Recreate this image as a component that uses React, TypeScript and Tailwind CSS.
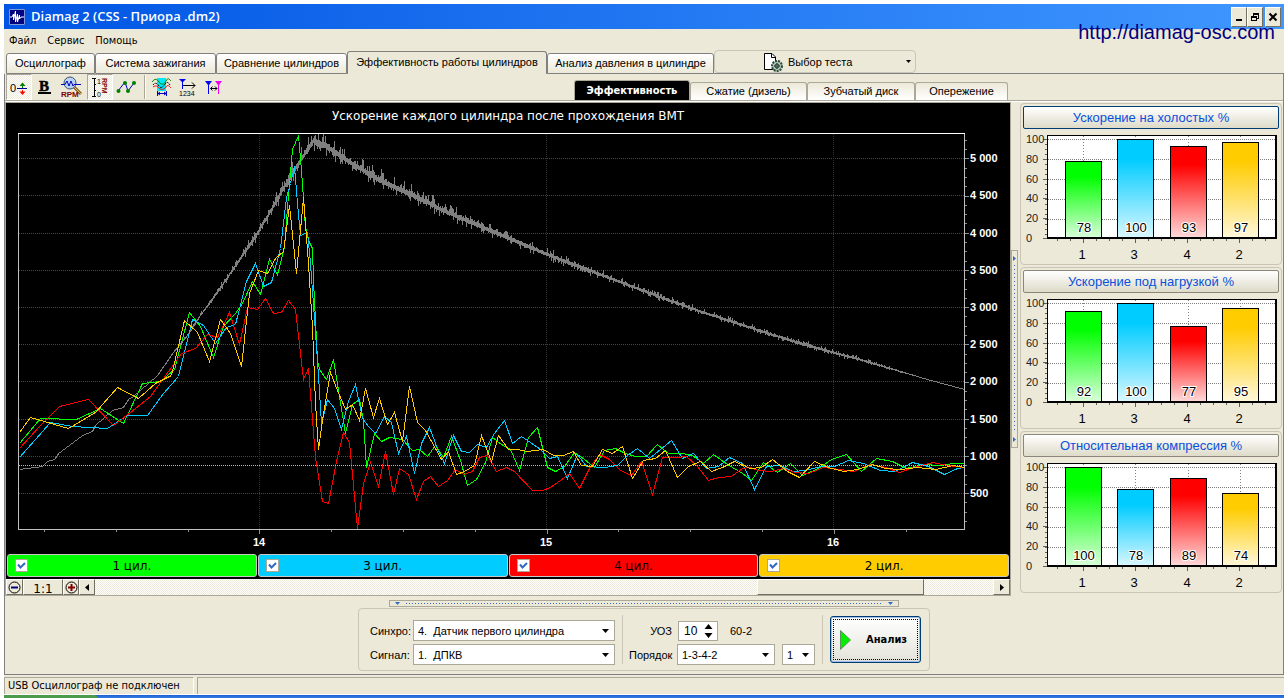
import type { ReactNode } from "react";

type Point = [number, number];

const COLORS = {
  green: "#00ff00",
  blue: "#00ccff",
  red: "#ff0000",
  yellow: "#ffcc00",
};

const GREEN: Point[] = [
  [19, 443], [40, 418], [76, 419], [100, 408], [123, 423], [142, 383], [160, 381], [174, 369],
  [189, 312], [200, 326], [213, 357], [223, 326], [235, 313], [242, 303], [252, 281], [260, 294],
  [269, 259], [277, 274], [284, 247], [287, 207], [292, 149], [298, 135], [301, 170], [305, 227],
  [309, 242], [312, 248], [313, 280], [317, 360], [319, 369], [326, 379], [333, 359], [338, 390],
  [345, 433], [352, 404], [359, 399], [363, 420], [366, 467], [374, 433], [381, 441], [389, 437],
  [402, 439], [412, 450], [419, 449], [427, 456], [435, 445], [443, 457], [451, 436], [460, 460],
  [467, 485], [476, 479], [485, 462], [492, 437], [501, 444], [510, 449], [519, 470], [528, 437],
  [537, 427], [547, 467], [555, 471], [564, 466], [574, 452], [584, 459], [594, 467], [604, 450],
  [615, 448], [625, 453], [635, 456], [646, 456], [657, 444], [668, 453], [682, 453], [692, 455],
  [703, 463], [713, 454], [727, 464], [742, 473], [751, 480], [763, 462], [777, 472], [790, 463],
  [802, 475], [818, 468], [831, 459], [846, 454], [861, 471], [876, 458], [892, 461], [906, 468],
  [923, 464], [940, 465], [953, 463], [964, 463],
];

const BLUE: Point[] = [
  [19, 457], [50, 422], [72, 426], [107, 428], [127, 415], [147, 415], [163, 393], [178, 376],
  [192, 319], [203, 325], [215, 343], [226, 327], [235, 324], [246, 281], [255, 263], [263, 286],
  [271, 282], [280, 248], [286, 197], [290, 183], [294, 166], [297, 203], [300, 235], [307, 232],
  [310, 263], [317, 360], [321, 423], [327, 399], [334, 408], [341, 429], [348, 401], [355, 384],
  [362, 418], [368, 426], [375, 433], [384, 416], [391, 422], [398, 453], [406, 436], [414, 473],
  [421, 443], [429, 427], [437, 448], [444, 463], [453, 435], [461, 451], [469, 452], [477, 444],
  [486, 447], [494, 433], [504, 420], [512, 443], [521, 436], [530, 442], [540, 449], [549, 458],
  [557, 456], [567, 478], [577, 454], [586, 466], [605, 467], [617, 465], [627, 455], [637, 448],
  [649, 458], [660, 449], [671, 440], [682, 458], [693, 453], [706, 468], [718, 466], [729, 457],
  [742, 463], [754, 489], [766, 466], [780, 465], [792, 471], [805, 470], [820, 466], [834, 466],
  [848, 460], [863, 463], [880, 470], [895, 471], [912, 462], [928, 466], [944, 474], [957, 468],
  [964, 467],
];

const RED: Point[] = [
  [19, 448], [40, 425], [59, 406], [88, 399], [113, 425], [130, 412], [150, 396], [163, 378],
  [181, 353], [195, 348], [207, 334], [217, 337], [229, 312], [239, 344], [247, 307], [257, 309],
  [265, 298], [273, 313], [281, 312], [288, 300], [295, 309], [303, 379], [308, 368], [315, 457],
  [322, 501], [328, 503], [336, 461], [343, 432], [349, 442], [357, 528], [363, 483], [370, 462],
  [378, 486], [385, 451], [393, 494], [399, 468], [408, 474], [416, 499], [423, 481], [430, 476],
  [438, 486], [447, 480], [455, 469], [463, 474], [472, 471], [479, 457], [487, 455], [496, 471],
  [506, 467], [514, 471], [532, 490], [542, 490], [550, 487], [560, 480], [569, 473], [579, 488],
  [590, 466], [599, 454], [609, 459], [620, 470], [631, 475], [641, 461], [652, 494], [662, 457],
  [677, 457], [686, 456], [697, 466], [708, 480], [718, 477], [731, 476], [742, 468], [750, 467],
  [758, 470], [770, 471], [783, 468], [795, 472], [808, 473], [823, 467], [840, 469], [853, 471],
  [870, 464], [885, 467], [899, 472], [913, 467], [932, 462], [947, 465], [964, 467],
];

const YELLOW: Point[] = [
  [19, 432], [30, 417], [68, 428], [95, 412], [117, 387], [138, 398], [155, 383], [171, 375],
  [184, 320], [197, 332], [209, 361], [220, 319], [230, 333], [241, 366], [249, 293], [258, 270],
  [267, 273], [275, 258], [283, 251], [289, 205], [296, 273], [303, 197], [308, 263], [312, 327],
  [315, 403], [318, 449], [322, 420], [330, 372], [337, 390], [345, 409], [352, 404], [359, 420],
  [365, 388], [373, 417], [379, 398], [387, 424], [394, 412], [402, 441], [409, 386], [417, 422],
  [425, 430], [441, 459], [448, 451], [456, 474], [464, 471], [474, 465], [481, 435], [491, 461],
  [498, 435], [508, 449], [517, 449], [527, 451], [543, 449], [553, 455], [563, 455], [573, 451],
  [581, 465], [592, 466], [602, 449], [612, 453], [622, 446], [632, 478], [643, 460], [655, 458],
  [665, 450], [677, 477], [688, 466], [700, 461], [711, 471], [722, 467], [734, 461], [750, 468],
  [761, 467], [772, 459], [787, 471], [799, 477], [814, 461], [828, 467], [843, 471], [857, 469],
  [872, 464], [885, 468], [900, 469], [917, 467], [935, 469], [953, 465], [964, 467],
];

const SPEED: Point[] = [
  [19, 469], [42, 466], [47, 461], [54, 459], [58, 453], [82, 435], [92, 431], [95, 425],
  [112, 410], [123, 407], [128, 399], [133, 396], [157, 375], [173, 352], [187, 335], [200, 315],
  [217, 292], [233, 268], [252, 241], [267, 216], [283, 188], [300, 160], [313, 140], [328, 147],
  [353, 164], [380, 180], [413, 195], [443, 210], [490, 230], [547, 254], [600, 274], [650, 293],
  [700, 311], [740, 324], [768, 333], [800, 343], [833, 352], [863, 360], [900, 371], [927, 379],
  [964, 389],
];

// half height of the jitter on the speed trace
const JITTER: Point[] = [
  [19, 0], [170, 0], [200, 2], [240, 5], [290, 9], [400, 8], [450, 7], [520, 6], [600, 4],
  [700, 3], [810, 3], [870, 2], [920, 0], [964, 0],
];

function interpolate(points: Point[], x: number) {
  for (let i = 1; i < points.length; i++) {
    const [x1, y1] = points[i];
    if (x <= x1) {
      const [x0, y0] = points[i - 1];
      return y0 + ((y1 - y0) * (x - x0)) / (x1 - x0);
    }
  }
  return points[points.length - 1][1];
}

function noise(n: number) {
  const v = Math.sin(n * 127.1) * 43758.5453;
  return v - Math.floor(v);
}

function speedPath() {
  const parts: string[] = [];
  for (let x = 19; x <= 964; x++) {
    const y = interpolate(SPEED, x);
    const amp = interpolate(JITTER, x);
    // most samples stay near the centre, a few spike out
    const up = amp * (0.2 + 1.2 * noise(x) ** 4);
    const down = amp * (0.2 + 0.9 * noise(x + 0.5) ** 4);
    const top = Math.max(134, Math.round(y - up));
    const bottom = Math.round(y + down);
    parts.push(`${parts.length ? "L" : "M"}${x}.5 ${top}.5`, `L${x}.5 ${bottom}.5`);
  }
  return parts.join(" ");
}

function toPoints(points: Point[]) {
  return points.map(([x, y]) => `${x + 0.5},${y + 0.5}`).join(" ");
}

const Y_LABELS = ["500", "1 000", "1 500", "2 000", "2 500", "3 000", "3 500", "4 000", "4 500", "5 000"];

function AccelerationChart() {
  const rowY = (i: number) => Math.round(493 - i * 37.2) + 0.5;
  return (
    <svg
      viewBox="6 103 1004 451"
      className="block h-[451px] w-full"
      fontFamily="'Liberation Sans', Arial, sans-serif"
      aria-label="Ускорение каждого цилиндра после прохождения ВМТ"
    >
      <text
        x={508}
        y={120}
        textAnchor="middle"
        fill="#fff"
        fontSize={12}
        fontFamily="'DejaVu Sans', Verdana, sans-serif"
      >
        Ускорение каждого цилиндра после прохождения ВМТ
      </text>
      <g shapeRendering="crispEdges" fill="none">
        {Y_LABELS.map((label, i) => (
          <line key={label} x1={19} x2={964} y1={rowY(i)} y2={rowY(i)} stroke="#484848" strokeDasharray="1 1" />
        ))}
        {[259.5, 546.5, 833.5].map((x) => (
          <line key={x} x1={x} x2={x} y1={134} y2={529} stroke="#303030" strokeDasharray="1 1" />
        ))}
        <path d={speedPath()} stroke="#808080" />
        <polyline points={toPoints(GREEN)} stroke={COLORS.green} />
        <polyline points={toPoints(BLUE)} stroke={COLORS.blue} />
        <polyline points={toPoints(RED)} stroke={COLORS.red} />
        <polyline points={toPoints(YELLOW)} stroke={COLORS.yellow} />
        <line x1={19} x2={964} y1={465.5} y2={465.5} stroke="#40f0f0" strokeDasharray="1 1" />
        <path d="M18.5 133V529.5H964.5V133" stroke="#c0c0c0" />
        <path d="M18 133.5H965" stroke="#fff" />
        {Array.from({ length: 13 }, (_, i) => {
          const x = Math.round(44 + i * 71.8) + 0.5;
          return <line key={i} x1={x} x2={x} y1={530} y2={i % 4 === 3 ? 534 : 532} stroke="#909090" />;
        })}
        {Array.from({ length: 42 }, (_, i) => {
          const y = Math.round(521 - i * 9.3) + 0.5;
          return <line key={i} x1={965} x2={i % 4 === 3 ? 969 : 967} y1={y} y2={y} stroke="#909090" />;
        })}
      </g>
      <g fill="#fff" fontSize={11} fontWeight={700}>
        {Y_LABELS.map((label, i) => (
          <text key={label} x={970} y={Math.floor(rowY(i)) + 4}>
            {label}
          </text>
        ))}
        <text x={259} y={546} textAnchor="middle">14</text>
        <text x={546} y={546} textAnchor="middle">15</text>
        <text x={833} y={546} textAnchor="middle">16</text>
      </g>
    </svg>
  );
}

const CYLINDERS = [
  { name: "1", id: "green", color: COLORS.green, x: 46 },
  { name: "3", id: "blue", color: COLORS.blue, x: 98 },
  { name: "4", id: "red", color: COLORS.red, x: 151 },
  { name: "2", id: "yellow", color: COLORS.yellow, x: 203 },
];

function BarPanel({ title, values, focused }: { title: string; values: number[]; focused?: boolean }) {
  return (
    <section className="rounded border border-[#c9c6b8] px-[2px] pt-[2px]">
      <button
        type="button"
        className={`block h-[23px] w-full rounded-[2px] border bg-linear-to-b from-white to-[#dedbc9] text-[13px] leading-[20px] text-[#0a50dc] ${
          focused ? "border-[#003c74]" : "border-[#8a877a]"
        }`}
      >
        {title}
      </button>
      <svg viewBox="0 0 256 135" className="block h-[135px] w-full" aria-label={title}>
        <defs>
          {CYLINDERS.map((c) => (
            <linearGradient key={c.id} id={`bar-${c.id}`} x1="0" y1="0" x2="0" y2="1">
              <stop offset="0.2" stopColor={c.color} />
              <stop offset="1" stopColor={c.color} stopOpacity="0.15" />
            </linearGradient>
          ))}
        </defs>
        <g shapeRendering="crispEdges">
          <rect x={24} y={6} width={230} height={104} fill="#fff" />
          {[0, 1, 2, 3, 4].map((i) => (
            <line key={i} x1={25} x2={252} y1={10.5 + i * 20} y2={10.5 + i * 20} stroke="#808080" strokeDasharray="1 1" />
          ))}
          {CYLINDERS.map((c) => (
            <line key={c.id} x1={c.x + 14.5} x2={c.x + 14.5} y1={7} y2={109} stroke="#808080" strokeDasharray="1 2" />
          ))}
          {CYLINDERS.map((c, i) => {
            const h = Math.round(values[i] * 0.99);
            return (
              <g key={c.id}>
                <rect x={c.x - 3.5} y={109.5 - h} width={36} height={h - 1} fill="#fff" />
                <rect
                  x={c.x - 3.5}
                  y={109.5 - h}
                  width={36}
                  height={h - 1}
                  fill={`url(#bar-${c.id})`}
                  stroke="#000"
                />
              </g>
            );
          })}
          <path d="M24.5 6V110 M24 6.5H254" stroke="#000" />
          <path d="M253 6V110 M24 109H254" stroke="#000" strokeWidth={2} />
          {[0, 1, 2, 3, 4, 5].map((i) => (
            <path key={i} d={`M20 ${Math.round(10 + i * 19.8)}.5h4`} stroke="#606060" />
          ))}
          {Array.from({ length: 20 }, (_, i) => (
            <path key={i} d={`M22 ${Math.round(10 + i * 5)}.5h2`} stroke="#606060" />
          ))}
          {Array.from({ length: 17 }, (_, i) => (
            <path key={i} d={`M${34 + i * 13}.5 110v${i % 4 === 2 ? 4 : 2}`} stroke="#606060" />
          ))}
        </g>
        <g fontSize={11} fontFamily="'Liberation Sans', Arial, sans-serif">
          {[100, 80, 60, 40, 20, 0].map((v, i) => (
            <text key={v} x={3} y={14 + Math.round(i * 19.8)} fill="#222">
              {v}
            </text>
          ))}
        </g>
        <g fontSize={13} textAnchor="middle" fontFamily="'Liberation Sans', Arial, sans-serif">
          {CYLINDERS.map((c, i) => (
            <g key={c.id}>
              <text x={c.x + 15} y={103} stroke="#fff" strokeWidth={2} paintOrder="stroke">
                {values[i]}
              </text>
              <text x={c.x + 13} y={130}>
                {c.name}
              </text>
            </g>
          ))}
        </g>
      </svg>
    </section>
  );
}

function Icon({ children }: { children: ReactNode }) {
  return (
    <svg viewBox="0 -1 24 24" width={24} height={24} fill="none" aria-hidden="true">
      {children}
    </svg>
  );
}

function ToolButton({ label, pressed, children }: { label: string; pressed?: boolean; children: ReactNode }) {
  return (
    <button
      type="button"
      title={label}
      aria-label={label}
      aria-pressed={!!pressed}
      className={`h-[26px] w-[26px] border ${
        pressed
          ? "border-t-[#aca899] border-r-white border-b-white border-l-[#aca899] bg-[repeating-conic-gradient(#fff_0_25%,#ece9d8_0_50%)] bg-[length:2px_2px]"
          : "border-transparent"
      }`}
    >
      {children}
    </button>
  );
}

function Toolbar() {
  return (
    <div className="flex gap-px">
      <ToolButton label="Ноль" pressed>
        <Icon>
          <text x="3" y="16" fontSize="11" fill="#000" fontFamily="'Liberation Sans', Arial, sans-serif">
            0
          </text>
          <g shapeRendering="crispEdges">
            <path d="M10 12.5H20" stroke="#000090" />
            <path d="M15.5 9V12" stroke="#008000" />
            <path d="M15.5 14V17" stroke="#f00" />
          </g>
          <path d="M12.5 10L15.5 6.5 18.5 10Z" fill="#008000" />
          <path d="M12.5 15.5L15.5 19 18.5 15.5Z" fill="#f00" />
        </Icon>
      </ToolButton>
      <ToolButton label="Жирные линии">
        <Icon>
          <text
            x="5"
            y="15"
            fontSize="15"
            fontWeight="700"
            fill="#000"
            stroke="#000"
            strokeWidth="0.5"
            fontFamily="'Liberation Serif', 'Times New Roman', serif"
          >
            B
          </text>
          <path d="M4 17H17" stroke="#000" strokeWidth="2" />
        </Icon>
      </ToolButton>
      <ToolButton label="Обороты">
        <Icon>
          <path d="M13 11L20 18" stroke="#806020" strokeWidth="3" />
          <path d="M13 11L20 18" stroke="#e0c070" />
          <circle cx="9" cy="7" r="6" fill="#b8d4f4" stroke="#405070" />
          <path d="M0 8.5H4L6 5 8 10 10 5 12 10 13 8.5H20" stroke="#0000c0" />
          <text
            x="0"
            y="21"
            fontSize="8"
            fontWeight="700"
            fill="#800000"
            fontFamily="'Liberation Sans', Arial, sans-serif"
          >
            RPM
          </text>
        </Icon>
      </ToolButton>
      <ToolButton label="Шкала оборотов" pressed>
        <Icon>
          <path d="M4 2.5H8M4 20.5H8M6 2V21M6 8.5H8M6 14.5H8" stroke="#000" shapeRendering="crispEdges" />
          <text x="9" y="8" fontSize="7" fill="#000" fontFamily="'Liberation Sans', Arial, sans-serif">
            1
          </text>
          <text x="9" y="21" fontSize="7" fill="#000" fontFamily="'Liberation Sans', Arial, sans-serif">
            0
          </text>
          <text
            transform="rotate(90 14 2)"
            x="14"
            y="2"
            fontSize="7"
            fontWeight="700"
            fill="#800000"
            fontFamily="'Liberation Sans', Arial, sans-serif"
          >
            RPM
          </text>
        </Icon>
      </ToolButton>
      <ToolButton label="Точки">
        <Icon>
          <path d="M3 15L10 6 13 15 19 7" stroke="#0000d0" />
          <g fill="#008000">
            <circle cx="3.5" cy="15" r="2" />
            <circle cx="10" cy="7" r="2" />
            <circle cx="13" cy="15" r="2" />
            <circle cx="19" cy="7" r="2" />
          </g>
        </Icon>
      </ToolButton>
      <span className="mx-[3px] my-px w-[2px] border-l border-[#aca899] bg-white" />
      <ToolButton label="Наложение">
        <Icon>
          <path d="M6 2H15V15H6Z" fill="#00e8f8" />
          <path d="M1 6C4 2 6 3 8 6S13 9 15 5 18 3 20 5" stroke="#008000" />
          <path d="M2 9C4 6 6 7 8 10S12 11 14 8 18 7 19 9" stroke="#000" strokeDasharray="2 1" />
          <path d="M2 11C5 9 6 10 8 12S13 14 15 11 18 10 20 12" stroke="#f00" />
          <path d="M6.5 15V20M15.5 15V20M7 17.5H15M9 16L7 17.5 9 19M13 16L15 17.5 13 19" stroke="#0000c0" />
        </Icon>
      </ToolButton>
      <ToolButton label="Нумерация">
        <Icon>
          <path d="M1 3H8L5 6V13H4V6Z" fill="#0000f0" />
          <path d="M5 9.5H17M14 6.5L17 9.5 14 12.5" stroke="#000" />
          <text x="1" y="20" fontSize="7" fill="#000" fontFamily="'Liberation Sans', Arial, sans-serif">
            1234
          </text>
        </Icon>
      </ToolButton>
      <ToolButton label="Маркеры">
        <Icon>
          <path d="M0 5H7L4 9V18H3V9Z" fill="#0000f0" />
          <path d="M10 5H17L14 9V18H13V9Z" fill="#f000f0" />
          <path d="M5.5 12.5H12M7.5 10.5L5.5 12.5 7.5 14.5M10 10.5L12 12.5 10 14.5" stroke="#000" />
        </Icon>
      </ToolButton>
    </div>
  );
}

function Select({ id, options, className }: { id: string; options: string[]; className: string }) {
  return (
    <span className="relative flex">
      <select
        id={id}
        className={`h-[21px] appearance-none border border-[#aca899] bg-white pl-[4px] text-[11px] leading-[18px] ${className}`}
      >
        {options.map((o) => (
          <option key={o}>{o}</option>
        ))}
      </select>
      <svg viewBox="0 0 7 4" width={7} height={4} className="pointer-events-none absolute top-[9px] right-[6px]">
        <path d="M0 0H7L3.5 4Z" />
      </svg>
    </span>
  );
}

const TABS = [
  { name: "Осциллограф", width: "w-[89px]" },
  { name: "Система зажигания", width: "w-[121px]" },
  { name: "Сравнение цилиндров", width: "w-[131px]" },
  { name: "Эффективность работы цилиндров", width: "w-[200px]", selected: true },
  { name: "Анализ давления в цилиндре", width: "w-[167px]" },
];

const SUB_TABS = [
  { name: "Сжатие (дизель)", width: "w-[117px]" },
  { name: "Зубчатый диск", width: "w-[108px]" },
  { name: "Опережение", width: "w-[93px]" },
];

const LEGEND = [
  { name: "1 цил.", id: "cyl-1", bg: "bg-[#00ff00]" },
  { name: "3 цил.", id: "cyl-3", bg: "bg-[#00ccff]" },
  { name: "4 цил.", id: "cyl-4", bg: "bg-[#ff0000]" },
  { name: "2 цил.", id: "cyl-2", bg: "bg-[#ffcc00]" },
];

const CAPTION_BUTTON = "flex h-[20px] items-center justify-center border border-t-white border-r-[#716f64] border-b-[#716f64] border-l-white bg-[#ece9d8]";
const SCROLL_BUTTON = "flex h-[16px] items-center justify-center border border-t-white border-r-[#716f64] border-b-[#716f64] border-l-white bg-[#ece9d8]";

function TitleBar() {
  return (
    <header className="relative flex h-[25px] items-center bg-linear-to-r from-[#0054e3] to-[#3f97ff] px-[3px]">
      <svg viewBox="0 0 16 16" width={16} height={16} className="ml-[2px]" aria-hidden="true">
        <rect width="16" height="16" fill="#000080" />
        <path d="M0.5 0.5H15.5V15.5H0.5Z" stroke="#8098d8" fill="none" />
        <path d="M1 8H3L4.5 5V11L6.5 2V13L8.5 5V13L10.5 6V10L12 8H15" stroke="#fff" fill="none" />
      </svg>
      <h1 className="ml-[6px] font-['Open_Sans','Noto_Sans',sans-serif] text-[13px] font-semibold text-white">
        Diamag 2 (CSS - Приора .dm2)
      </h1>
      <div className="ml-auto flex">
        <button type="button" aria-label="Свернуть" className={`${CAPTION_BUTTON} w-[16px]`}>
          <svg viewBox="0 0 10 10" width={10} height={10}>
            <path d="M2 7H8V9H2Z" />
          </svg>
        </button>
        <button type="button" aria-label="Восстановить" className={`${CAPTION_BUTTON} w-[16px]`}>
          <svg viewBox="0 0 10 10" width={10} height={10} fill="none" stroke="#000" shapeRendering="crispEdges">
            <path d="M3 1.5H9M3.5 1V4M8.5 1V6.5H7M3 2.5H9M1 4.5H7M1 5.5H7M1.5 4V9M6.5 4V9M1 8.5H7" />
          </svg>
        </button>
        <button type="button" aria-label="Закрыть" className={`${CAPTION_BUTTON} ml-[2px] w-[16px]`}>
          <svg viewBox="0 0 10 10" width={10} height={10} stroke="#000" strokeWidth={2}>
            <path d="M1.5 1.5L8.5 8.5M8.5 1.5L1.5 8.5" />
          </svg>
        </button>
      </div>
      <a
        href="#site"
        className="absolute top-[16px] right-[9px] z-10 text-[20px] leading-[24px] text-[#000080]"
      >
        http://diamag-osc.com
      </a>
    </header>
  );
}

function TabBar() {
  return (
    <div className="flex h-[24px] items-end">
      <div role="tablist" className="flex items-end pl-[2px]">
        {TABS.map((t) => (
          <button
            key={t.name}
            type="button"
            role="tab"
            aria-selected={!!t.selected}
            className={`rounded-t-[3px] border border-[#808080] text-[11px] whitespace-nowrap ${t.width} ${
              t.selected
                ? "h-[23px] border-b-0 bg-[#ece9d8] pb-[2px]"
                : "h-[21px] bg-linear-to-b from-white to-[#ece9d8]"
            }`}
          >
            {t.name}
          </button>
        ))}
      </div>
      <div className="flex h-full flex-1 border-b border-[#808080]">
        <button
          type="button"
          className="flex h-[23px] w-[202px] items-center rounded border border-[#c9c6b8] pr-1 pl-[48px] text-[11px]"
        >
          <svg viewBox="0 0 20 20" width={20} height={20} fill="none" aria-hidden="true">
            <path d="M1.5 1.5H9L12.5 5V17.5H1.5Z" fill="#fff" stroke="#000" />
            <path d="M8.5 1.5V5.5H12.5" stroke="#000" />
            <circle cx="14" cy="14" r="5" fill="#a8c8b4" stroke="#304838" strokeWidth="2" strokeDasharray="2 1" />
            <circle cx="14" cy="14" r="2" fill="#fff" stroke="#203028" />
            <path d="M14 11V17M11 14H17" stroke="#203028" />
          </svg>
          <span className="ml-[5px] pt-px">Выбор теста</span>
          <svg viewBox="0 0 5 3" width={5} height={3} className="ml-auto">
            <path d="M0 0H5L2.5 3Z" />
          </svg>
        </button>
      </div>
    </div>
  );
}

function ScrollRow() {
  return (
    <div className="flex h-[16px] bg-[#ece9d8]">
      <button type="button" aria-label="Уменьшить" className={`${SCROLL_BUTTON} w-[17px]`}>
        <svg viewBox="0 0 13 13" width={13} height={13} fill="none" className="shrink-0">
          <circle cx="6.5" cy="6.5" r="5.5" stroke="#000" />
          <path d="M3 6.5H10" stroke="#000080" strokeWidth="2" />
        </svg>
      </button>
      <button
        type="button"
        className={`${SCROLL_BUTTON} w-[40px] pt-[3px] font-['DejaVu_Sans',Verdana,sans-serif] text-[12px]`}
      >
        1:1
      </button>
      <button type="button" aria-label="Увеличить" className={`${SCROLL_BUTTON} w-[16px]`}>
        <svg viewBox="0 0 13 13" width={13} height={13} fill="none" className="shrink-0">
          <circle cx="6.5" cy="6.5" r="5.5" stroke="#000" />
          <path d="M3 6.5H10M6.5 3V10" stroke="#800000" strokeWidth="2" />
        </svg>
      </button>
      <button type="button" aria-label="Влево" className={`${SCROLL_BUTTON} w-[16px]`}>
        <svg viewBox="0 0 4 7" width={4} height={7}>
          <path d="M4 0V7L0 3.5Z" />
        </svg>
      </button>
      <div className="flex flex-1 justify-end bg-[repeating-conic-gradient(#fff_0_25%,#ece9d8_0_50%)] bg-[length:2px_2px] pr-[69px]">
        <div className={`${SCROLL_BUTTON} w-[167px]`} />
      </div>
      <button type="button" aria-label="Вправо" className={`${SCROLL_BUTTON} w-[17px]`}>
        <svg viewBox="0 0 4 7" width={4} height={7}>
          <path d="M0 0V7L4 3.5Z" />
        </svg>
      </button>
    </div>
  );
}

function Controls() {
  return (
    <form
      onSubmit={(e) => e.preventDefault()}
      className="flex h-[63px] items-center rounded border border-[#c9c6b8] pr-[8px] pl-[11px] text-[11px]"
    >
      <div className="grid grid-cols-[auto_auto] items-center gap-y-[3px] pt-[6px]">
        <label htmlFor="sync" className="w-[43px] pt-[2px] whitespace-nowrap">
          Синхро:
        </label>
        <Select id="sync" options={["4.\u00a0\u00a0Датчик первого цилиндра"]} className="w-[202px]" />
        <label htmlFor="signal" className="w-[43px] pt-[2px] whitespace-nowrap">
          Сигнал:
        </label>
        <Select id="signal" options={["1.\u00a0\u00a0ДПКВ"]} className="w-[202px]" />
      </div>
      <span className="mr-[6px] ml-[7px] h-[49px] w-px bg-[#c9c6b8]" />
      <div className="flex flex-col gap-[3px] pt-[6px]">
        <div className="flex h-[21px] items-center">
          <label htmlFor="uoz" className="w-[49px] pt-[2px] pr-[6px] text-right">
            УОЗ
          </label>
          <span className="relative flex">
            <input
              id="uoz"
              type="text"
              defaultValue="10"
              className="h-[20px] w-[40px] border border-[#aca899] bg-white pl-[5px] text-[12px]"
            />
            <svg viewBox="0 0 9 14" width={9} height={14} className="pointer-events-none absolute top-[3px] right-[5px]">
              <path d="M0.5 5H8.5L4.5 0ZM0.5 9H8.5L4.5 14Z" />
            </svg>
          </span>
          <span className="ml-[12px] pt-[2px]">60-2</span>
        </div>
        <div className="flex h-[21px] items-center">
          <label htmlFor="order" className="w-[48px] pt-[2px]">
            Порядок
          </label>
          <Select id="order" options={["1-3-4-2"]} className="w-[98px]" />
          <span className="w-[7px]" />
          <Select id="first" options={["1"]} className="w-[33px]" />
        </div>
      </div>
      <span className="mr-[7px] ml-[7px] h-[49px] w-px bg-[#c9c6b8]" />
      <button
        type="submit"
        className="h-[47px] w-[91px] rounded-[3px] border border-[#003c74] bg-linear-to-b from-white to-[#e4e3da] p-[2px] ring-1 ring-[#9ebcec] ring-inset"
      >
        <span className="flex h-full items-center border border-dotted border-black pl-[6px]">
          <svg viewBox="0 0 11 20" width={11} height={20} aria-hidden="true">
            <path d="M0.5 0.5V19.5L10.5 10Z" fill="#00f000" stroke="#609060" />
          </svg>
          <span className="ml-[15px] pt-px font-['DejaVu_Sans_Condensed','DejaVu_Sans',sans-serif] text-[11px] font-bold">
            Анализ
          </span>
        </span>
      </button>
    </form>
  );
}

export default function App() {
  return (
    <div className="bg-white px-1 pt-1 font-['Liberation_Sans',Arial,sans-serif] text-black">
      <TitleBar />
      <div className="bg-[#ece9d8]">
        <nav className="flex h-[21px] items-center gap-[11px] pt-[3px] pl-[5px] font-['DejaVu_Sans_Condensed','DejaVu_Sans',sans-serif] text-[11px]">
          <button type="button">Файл</button>
          <button type="button">Сервис</button>
          <button type="button">Помощь</button>
        </nav>
        <TabBar />
        <main className="border-x border-b border-[#808080]">
          <div className="flex h-[27px] items-end justify-between border-b border-[#aca899] pr-[275px] pl-px">
            <Toolbar />
            <div role="tablist" className="flex items-end">
              <button
                type="button"
                role="tab"
                aria-selected="true"
                className="h-[20px] w-[116px] rounded-t-[3px] border border-b-0 border-[#aca899] bg-black pt-[2px] font-['DejaVu_Sans_Condensed','DejaVu_Sans',sans-serif] text-[11px] font-bold text-white"
              >
                Эффективность
              </button>
              {SUB_TABS.map((t) => (
                <button
                  key={t.name}
                  type="button"
                  role="tab"
                  aria-selected="false"
                  className={`h-[18px] rounded-t-[3px] border border-b-0 border-[#aca899] bg-linear-to-b from-[#ece9d8] to-white text-[11px] whitespace-nowrap ${t.width}`}
                >
                  {t.name}
                </button>
              ))}
            </div>
          </div>
          <div className="flex border-t border-white">
            <div className="min-w-0 flex-1 border border-[#aca899]">
              <div className="bg-black pb-[2px]">
                <AccelerationChart />
                <div className="grid grid-cols-4 gap-px px-px">
                  {LEGEND.map((l) => (
                    <label
                      key={l.id}
                      htmlFor={l.id}
                      className={`flex h-[23px] items-center rounded-[3px] border border-[#c8c8c8] px-[7px] font-['DejaVu_Sans',Verdana,sans-serif] text-[12px] ${l.bg}`}
                    >
                      <span className="relative flex">
                        <input
                          id={l.id}
                          type="checkbox"
                          defaultChecked
                          className="peer h-[13px] w-[13px] appearance-none border border-[#aca899] bg-white"
                        />
                        <svg
                          viewBox="0 0 13 13"
                          width={13}
                          height={13}
                          fill="none"
                          className="pointer-events-none absolute top-0 left-0 hidden peer-checked:block"
                        >
                          <path d="M3 5.5L5.5 8.5 10 4" stroke="#316ac5" strokeWidth="2" />
                        </svg>
                      </span>
                      <span className="flex-1 pt-px pr-[13px] text-center">{l.name}</span>
                    </label>
                  ))}
                </div>
              </div>
              <ScrollRow />
            </div>
            <div className="flex w-[9px] items-center">
              <div
                role="separator"
                aria-orientation="vertical"
                className="flex h-[198px] w-[7px] flex-col items-center justify-between border border-[#aca899] py-[5px]"
              >
                <svg viewBox="0 0 3 5" width={3} height={5}>
                  <path d="M0 0V5L3 2.5Z" fill="#316ac5" />
                </svg>
                <span className="my-[4px] w-px flex-1 bg-[repeating-linear-gradient(180deg,#316ac5_0_1px,transparent_1px_4px)]" />
                <svg viewBox="0 0 3 5" width={3} height={5}>
                  <path d="M0 0V5L3 2.5Z" fill="#316ac5" />
                </svg>
              </div>
            </div>
            <aside className="flex w-[263px] flex-col gap-[2px] pt-px pr-px">
              <BarPanel title="Ускорение на холостых %" values={[78, 100, 93, 97]} focused />
              <BarPanel title="Ускорение под нагрузкой %" values={[92, 100, 77, 95]} />
              <BarPanel title="Относительная компрессия %" values={[100, 78, 89, 74]} />
            </aside>
          </div>
          <div className="flex flex-col items-center gap-px pt-[4px] pb-[3px]">
            <div
              role="separator"
              className="flex h-[7px] w-[510px] items-center justify-between border border-[#aca899] px-[5px]"
            >
              <svg viewBox="0 0 5 3" width={5} height={3}>
                <path d="M0 0H5L2.5 3Z" fill="#316ac5" />
              </svg>
              <span className="mx-[6px] h-px flex-1 bg-[repeating-linear-gradient(90deg,#316ac5_0_1px,transparent_1px_3px)]" />
              <svg viewBox="0 0 5 3" width={5} height={3}>
                <path d="M0 0H5L2.5 3Z" fill="#316ac5" />
              </svg>
            </div>
            <Controls />
          </div>
        </main>
        <footer className="flex gap-[3px] pt-[2px] font-['DejaVu_Sans_Condensed','DejaVu_Sans',sans-serif] text-[11px]">
          <div className="h-[17px] w-[190px] border-t border-r border-l border-t-[#aca899] border-r-white border-l-[#aca899] pl-[3px] leading-[16px]">
            USB Осциллограф не подключен
          </div>
          <div className="h-[17px] flex-1 border-t border-l border-[#aca899]" />
        </footer>
      </div>
      <div className="mt-px flex h-[4px] bg-linear-to-b from-[#1f5fd0] to-[#3c86ee]">
        <span className="w-[94px] rounded-tr-[4px] bg-[#4c9a4c]" />
      </div>
    </div>
  );
}
